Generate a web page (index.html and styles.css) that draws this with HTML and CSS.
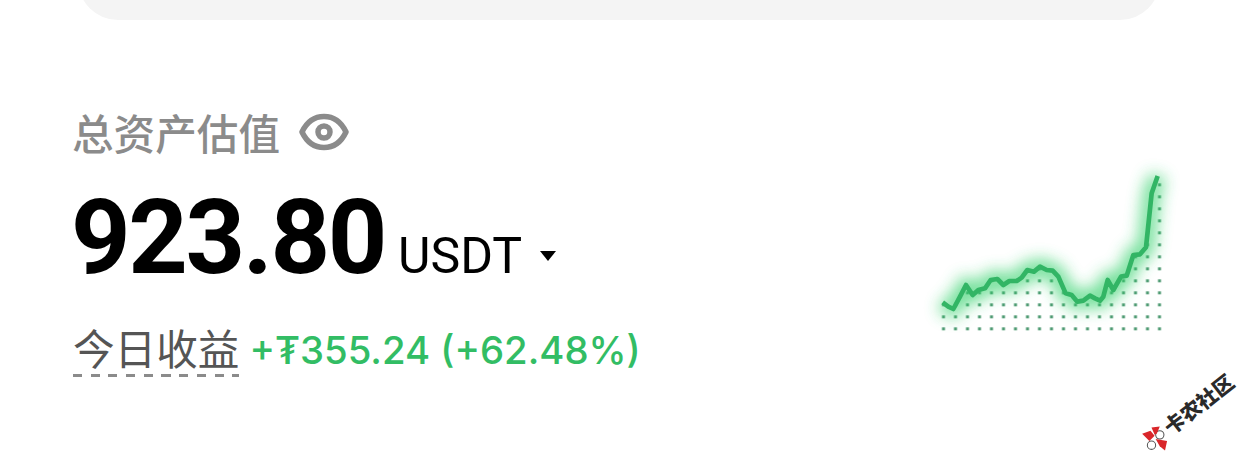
FILE: index.html
```html
<!DOCTYPE html>
<html lang="zh-CN">
<head>
    <meta charset="UTF-8">
    <title>总资产估值</title>
    <link rel="stylesheet" href="styles.css">
</head>
<body>
    <div class="top-card"></div>
    <div class="assets">
        <div class="assets-info">
            <div class="assets-title">
                <span>总资产估值</span>
                <svg class="eye" viewBox="0 0 50 40" fill="none" stroke="#8b8b8b">
                    <path d="M3 20C8 9.500 15.500 4.500 25 4.500S42 9.500 47 20C42 30.500 34.500 35.500 25 35.500S8 30.500 3 20z" stroke-width="5.500" stroke-linejoin="round"/>
                    <circle cx="25" cy="20" r="6" stroke-width="5.500"/>
                </svg>
            </div>
            <div class="assets-value">
                <span class="amount">923.80</span>
                <span class="unit">USDT</span>
                <span class="caret"></span>
            </div>
            <div class="assets-pnl">
                <span class="pnl-label">今日收益</span>
                <span class="pnl-value">+₮355.24 (+62.48%)</span>
            </div>
        </div>
        <svg class="chart" viewBox="0 0 780 570">
            <defs>
                <pattern id="dots" x="52" y="10" width="36" height="36" patternUnits="userSpaceOnUse">
                    <rect x="14" y="18" width="9" height="9" fill="#4e9a72"/>
                </pattern>
                <clipPath id="under">
                    <path d="M50 500L68 457 85 470 100 477 120 440 138 405 158 435 175 420 195 415 212 390 232 387 250 405 268 393 290 393 305 383 322 360 342 365 360 350 380 360 398 362 415 380 437 430 455 435 472 455 490 452 510 437 525 445 540 452 550 440 563 390 580 420 603 380 620 377 640 315 660 313 678 292 695 130 713 78 740 78V560H50z"/>
                </clipPath>
                <filter id="glow" x="-15%" y="-30%" width="130%" height="160%">
                    <feGaussianBlur stdDeviation="24"/>
                </filter>
            </defs>
            <rect width="780" height="570" fill="url(#dots)" clip-path="url(#under)"/>
            <polyline class="line-glow" filter="url(#glow)" points="68,457 85,470 100,477 120,440 138,405 158,435 175,420 195,415 212,390 232,387 250,405 268,393 290,393 305,383 322,360 342,365 360,350 380,360 398,362 415,380 437,430 455,435 472,455 490,452 510,437 525,445 540,452 550,440 563,390 580,420 603,380 620,377 640,315 660,313 678,292 695,130 713,78"/>
            <polyline class="line" points="68,457 85,470 100,477 120,440 138,405 158,435 175,420 195,415 212,390 232,387 250,405 268,393 290,393 305,383 322,360 342,365 360,350 380,360 398,362 415,380 437,430 455,435 472,455 490,452 510,437 525,445 540,452 550,440 563,390 580,420 603,380 620,377 640,315 660,313 678,292 695,130 713,78"/>
        </svg>
    </div>
    <div class="watermark">
        <svg class="watermark-logo" viewBox="0 0 26 26">
            <circle cx="18" cy="10" r="4" fill="#fff" stroke="#555" stroke-width="1"/>
            <circle cx="10" cy="20" r="4" fill="#fff" stroke="#555" stroke-width="1"/>
            <path d="M1 9L9 6l4 5-5 5z" fill="#d9262a"/>
            <path d="M10 3l8-1-3 7-2 1z" fill="#d9262a"/>
            <path d="M14 14l11 2-2 9-5-4z" fill="#d9262a"/>
        </svg>
        <span>卡农社区</span>
    </div>
</body>
</html>
```

FILE: styles.css
```css
body {
    margin: 0;
    height: 461px;
    overflow: hidden;
    background-color: #fff;
    font-family: Roboto, "Noto Sans CJK SC", sans-serif;
}
.top-card {
    height: 80px;
    margin: -60px 82px 0 78px;
    background-color: #f4f4f4;
    border-radius: 50px;
}
.assets {
    display: flex;
    justify-content: space-between;
    padding: 84px 62px 0 73px;
}
.assets-title {
    display: flex;
    align-items: center;
    gap: 19px;
    height: 56px;
    margin-left: -1px;
    font-size: 41.600px;
    font-weight: 500;
    color: #8b8b8b;
}
.eye {
    width: 50px;
    height: 40px;
}
.assets-value {
    display: flex;
    align-items: baseline;
    margin: 22px 0 0 -2px;
    height: 112px;
    color: #000;
}
.amount {
    font-size: 104px;
    font-weight: 700;
    line-height: 112px;
    letter-spacing: -2.400px;
}
.unit {
    margin-left: 13px;
    font-size: 50px;
}
.caret {
    width: 0;
    height: 0;
    margin-left: 18px;
    border-left: 8.500px solid transparent;
    border-right: 8.500px solid transparent;
    border-top: 10px solid #000;
    transform: translateY(-12px);
}
.assets-pnl {
    display: flex;
    align-items: flex-start;
    gap: 10px;
    margin-top: 31px;
}
.pnl-label {
    font-size: 41.600px;
    line-height: 52px;
    color: #555;
    background: repeating-linear-gradient(90deg, #8b8b8b 0 9px, transparent 9px 17.700px) bottom left / 100% 3px no-repeat;
}
.pnl-value {
    font-family: Inter, "Noto Sans CJK SC", sans-serif;
    font-size: 38.300px;
    line-height: 50px;
    font-weight: 500;
    color: #32bd64;
}
.chart {
    width: 260px;
    height: 190px;
    margin-top: 46px;
    flex-shrink: 0;
}
.line, .line-glow {
    fill: none;
    stroke: #32b565;
    stroke-width: 14;
    stroke-linejoin: round;
}
.line-glow {
    stroke: #2fd068;
    stroke-width: 50;
    opacity: 0.7;
}
.watermark {
    position: absolute;
    left: 1132px;
    top: 397px;
    display: flex;
    align-items: center;
    gap: 1px;
    transform: rotate(-38deg);
    font-size: 20.500px;
    font-weight: 900;
    color: #2a2a2a;
    white-space: nowrap;
}
.watermark-logo {
    width: 27px;
    height: 27px;
    transform: rotate(38deg);
}
```
